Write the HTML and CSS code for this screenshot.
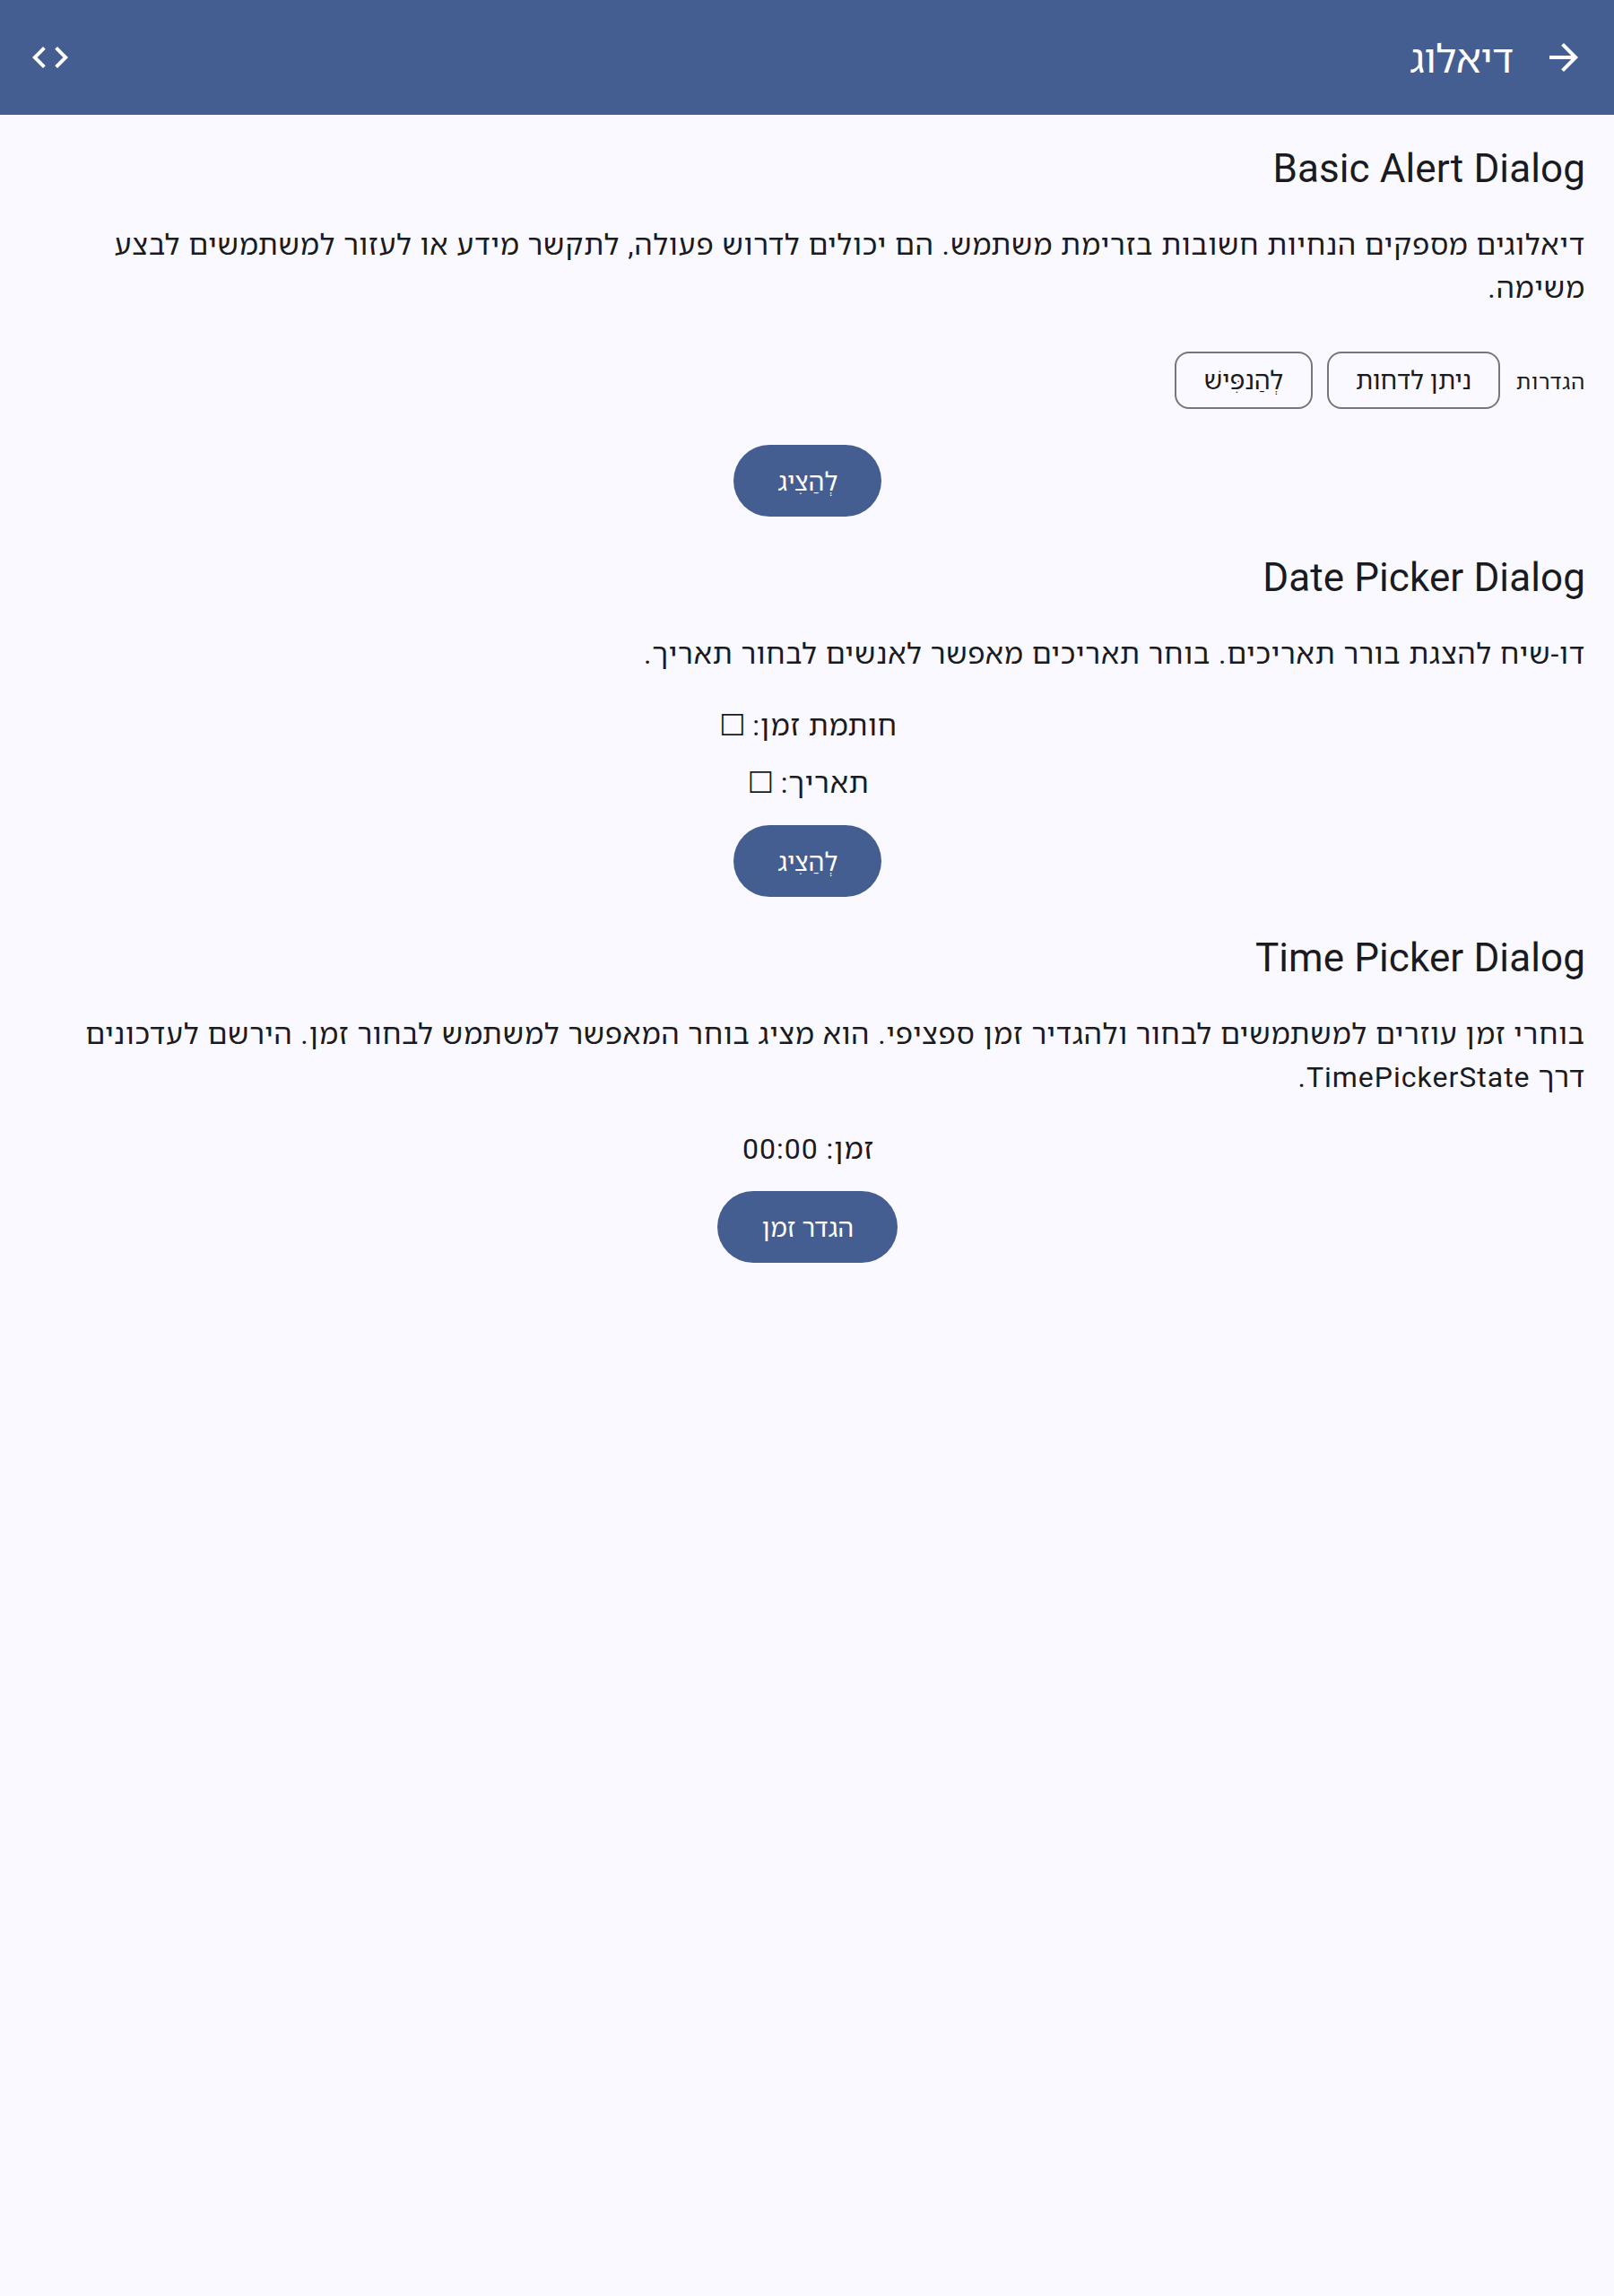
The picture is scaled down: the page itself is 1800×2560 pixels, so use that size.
FILE: index.html
```html
<!DOCTYPE html>
<html lang="he" dir="rtl">
<head>
<meta charset="utf-8">
<title>דיאלוג</title>
<link rel="stylesheet" href="styles.css">
</head>
<body>
<header class="app-bar">
  <svg class="icon" viewBox="0 0 24 24"><path d="M12 4l-1.41 1.41L16.17 11H4v2h12.17l-5.58 5.59L12 20l8-8z"/></svg>
  <h1 class="title">דיאלוג</h1>
  <svg class="icon" viewBox="0 0 24 24"><path d="M9.4 16.6L4.8 12l4.6-4.6L8 6l-6 6 6 6 1.4-1.4zm5.2 0l4.6-4.6-4.6-4.6L16 6l6 6-6 6-1.4-1.4z"/></svg>
</header>
<main class="content">
  <section class="section">
    <h2 class="heading">Basic Alert Dialog</h2>
    <p class="body">דיאלוגים מספקים הנחיות חשובות בזרימת משתמש. הם יכולים לדרוש פעולה, לתקשר מידע או לעזור למשתמשים לבצע<br>משימה.</p>
    <div class="options">
      <span class="options-label">הגדרות</span>
      <button class="chip chip-wide">ניתן לדחות</button>
      <button class="chip">לְהַנפִּישׁ</button>
    </div>
    <button class="button">לְהַצִיג</button>
  </section>
  <section class="section">
    <h2 class="heading">Date Picker Dialog</h2>
    <p class="body">דו-שיח להצגת בורר תאריכים. בוחר תאריכים מאפשר לאנשים לבחור תאריך.</p>
    <p class="value">חותמת זמן: <span class="box">☐</span></p>
    <p class="value value-next">תאריך: <span class="box">☐</span></p>
    <button class="button button-after-value">לְהַצִיג</button>
  </section>
  <section class="section">
    <h2 class="heading">Time Picker Dialog</h2>
    <p class="body">בוחרי זמן עוזרים למשתמשים לבחור ולהגדיר זמן ספציפי. הוא מציג בוחר המאפשר למשתמש לבחור זמן. הירשם לעדכונים<br>דרך <span class="latin">TimePickerState.</span></p>
    <p class="value">זמן: <span class="latin">00:00</span></p>
    <button class="button button-wide button-after-value">הגדר זמן</button>
  </section>
</main>
</body>
</html>
```
FILE: styles.css
```css
* { box-sizing: border-box; margin: 0; padding: 0; }

body {
  min-height: 2560px;
  background: #faf9ff;
  color: #1a1b20;
  font-family: Roboto, "Noto Sans Hebrew", "Open Sans", "DejaVu Sans", sans-serif;
  font-size: 32px;
  line-height: 48px;
  letter-spacing: 0.9px;
}

.app-bar {
  display: flex;
  align-items: center;
  height: 128px;
  padding: 0 32px;
  background: #455e91;
  color: #fff;
}

.icon { width: 48px; height: 48px; fill: #fff; flex: none; }

.title {
  flex: 1;
  margin-inline-start: 32px;
  padding-top: 4px;
  font-size: 44px;
  font-weight: 400;
  line-height: 56px;
  letter-spacing: -0.2px;
}

.content { padding: 0 32px; }

.section { display: flex; flex-direction: column; padding-top: 32px; }
.section + .section { padding-top: 40px; }

.heading {
  height: 56px;
  font-size: 44px;
  font-weight: 400;
  line-height: 56px;
  letter-spacing: 0.1px;
}

.body { margin-top: 33px; white-space: nowrap; }
.latin { letter-spacing: 1px; }

.options { display: flex; align-items: center; gap: 16px; height: 64px; margin: 47px 0 16px; }
.options-label {
  width: 79px;
  padding-top: 3px;
  font-size: 24px;
  line-height: 32px;
  letter-spacing: 0.8px;
  white-space: nowrap;
}

.chip {
  width: 154px;
  height: 64px;
  padding-top: 2px;
  border: 2px solid #75777f;
  border-radius: 16px;
  background: transparent;
  color: inherit;
  font-family: inherit;
  font-size: 28px;
  line-height: 40px;
  letter-spacing: 0;
}
.chip-wide { width: 193px; }

.value { height: 48px; margin-top: 32px; padding-left: 3px; text-align: center; }
.value-next { margin-top: 16px; }
.box {
  margin-inline-start: -2px;
  font-family: "DejaVu Sans", sans-serif;
  font-size: 33px;
  line-height: 1;
}

.button {
  align-self: center;
  width: 165px;
  height: 80px;
  margin-top: 24px;
  padding: 3px 0 0 2px;
  border: 0;
  border-radius: 40px;
  background: #455e91;
  color: #fff;
  font-family: inherit;
  font-size: 28px;
  line-height: 40px;
  letter-spacing: 0.2px;
}
.button-after-value { margin-top: 23px; }
.button-wide { width: 201px; }
```
